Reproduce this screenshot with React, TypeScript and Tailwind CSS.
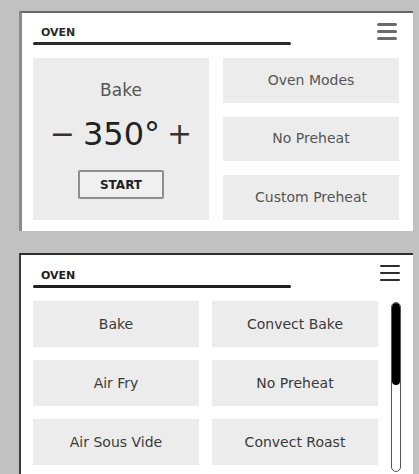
import React from 'react';

const font = { fontFamily: '"DejaVu Sans", "Noto Sans", sans-serif' };

const Hamburger = ({ dark }: { dark?: boolean }) => (
  <div className={`flex w-[20px] flex-col ${dark ? 'gap-[5px]' : 'gap-[4px]'}`}>
    {[0, 1, 2].map((i) => (
      <span key={i} className={`block w-full rounded-full ${dark ? 'h-[2px] bg-[#2e2e2e]' : 'h-[3px] bg-[#6a6a6a]'}`} />
    ))}
  </div>
);

const Header = ({ dark }: { dark?: boolean }) => (
  <div className="flex items-start justify-between">
    <div className="w-[258px]">
      <div className={`h-[11px] pl-[8px] text-[11px] font-bold leading-none ${dark ? 'text-[#1e1e1e]' : 'text-[#2a2a2a]'}`}>OVEN</div>
      <div className={`mt-[4px] h-[3px] rounded-full ${dark ? 'bg-[#1f1f1f]' : 'bg-[#2b2b2b]'}`} />
    </div>
    <div className={dark ? 'mr-[1px] mt-[-5px]' : 'mr-[2px] mt-[-4px]'}>
      <Hamburger dark={dark} />
    </div>
  </div>
);

const App = () => {
  const modes = ['Bake', 'Convect Bake', 'Air Fry', 'No Preheat', 'Air Sous Vide', 'Convect Roast'];

  return (
    <div className="h-[474px] w-[419px] overflow-hidden bg-[#c2c1c1] pl-[19px] pr-[6px] pt-[11px]" style={font}>
      {/* Bake screen */}
      <div className="border-l-[3px] border-t-2 border-l-[#8b8b8b] border-t-[#6a6a6a] bg-white pb-[11px] pl-[11px] pr-[14px] pt-[14px]">
        <Header />
        <div className="mt-[13px] flex gap-[14px]">
          <div className="flex h-[162px] w-[176px] flex-col items-center bg-[#ececec] pt-[24px]">
            <div className="text-[17px] leading-none text-[#555]">Bake</div>
            <div className="mt-[19px] flex items-center text-[#222]">
              <span className="text-[30px] leading-none text-[#333]">−</span>
              <span className="ml-[8px] text-[32px] leading-none">350°</span>
              <span className="ml-[7px] text-[30px] leading-none text-[#333]">+</span>
            </div>
            <div className="mt-[20px] flex h-[29px] w-[86px] items-center justify-center rounded-[2px] border-2 border-[#8e8e8e] bg-[#f0f0f0] text-[12px] font-bold text-[#222]">
              START
            </div>
          </div>
          <div className="flex flex-1 flex-col gap-[14px]">
            {['Oven Modes', 'No Preheat', 'Custom Preheat'].map((t) => (
              <div key={t} className="flex h-[44.5px] items-center justify-center bg-[#ececec] text-[14px] text-[#555]">
                {t}
              </div>
            ))}
          </div>
        </div>
      </div>

      {/* Oven modes screen */}
      <div className="mt-[22px] h-[260px] border-l-2 border-t-2 border-l-[#3a3a3a] border-t-[#2e2e2e] bg-white pl-[12px] pr-[12px] pt-[15px]">
        <Header dark />
        <div className="mt-[13px] flex items-start gap-[13px]">
          <div className="grid flex-1 grid-cols-2 gap-x-[13px] gap-y-[13px]">
            {modes.map((m) => (
              <div key={m} className="flex h-[46px] items-center justify-center bg-[#ececec] text-[14px] text-[#3a3a3a]">
                {m}
              </div>
            ))}
          </div>
          <div className="mt-[1px] flex h-[170px] w-[10px] flex-col overflow-hidden rounded-full border border-[#555] bg-white">
            <div className="h-[82px] rounded-full bg-black" />
          </div>
        </div>
      </div>
    </div>
  );
};

export default App;
